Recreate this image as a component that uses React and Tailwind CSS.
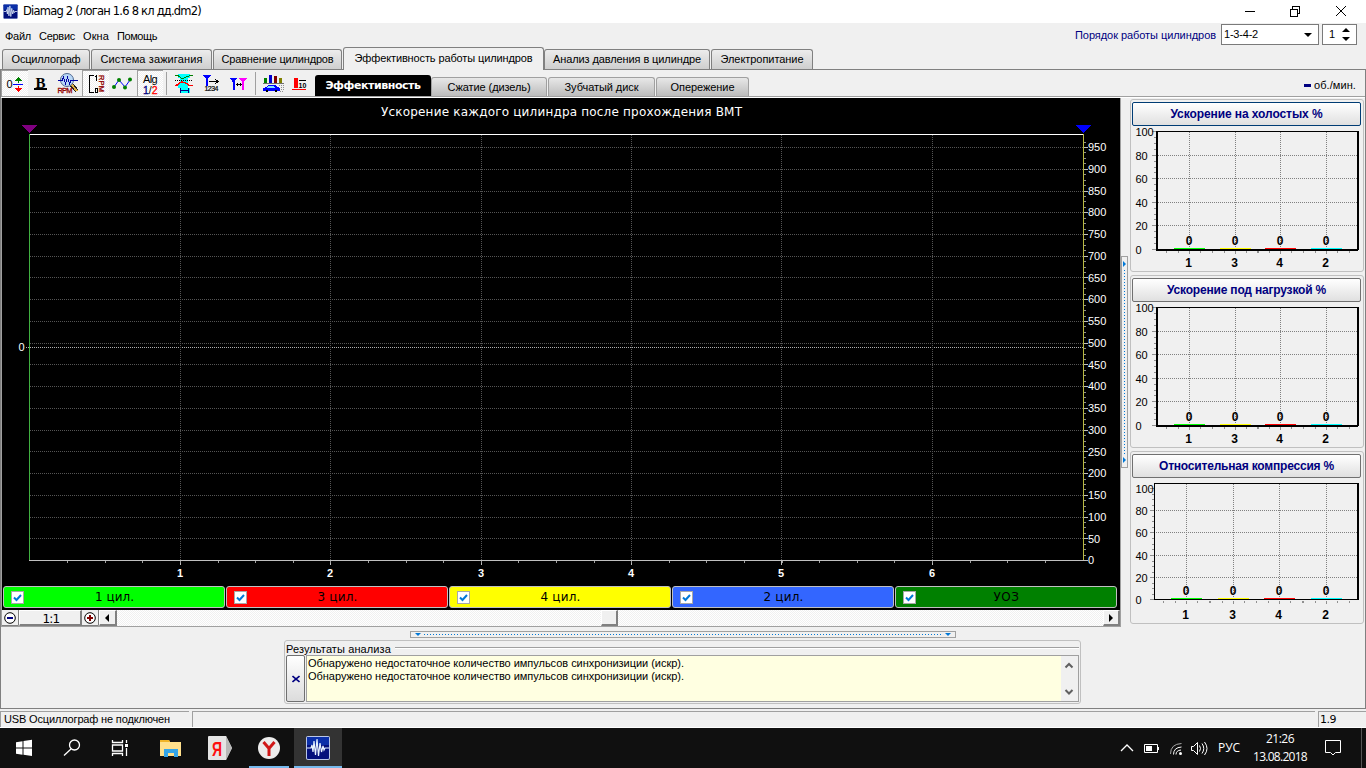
import { useLayoutEffect, useRef, useState } from "react";
import clsx from "clsx";

// Text set to a fixed width, the spare pixels are spread between the letters
const Label = ({ w, className, children }) => {
  const ref = useRef(null);
  const [spacing, setSpacing] = useState(0);

  useLayoutEffect(() => {
    const el = ref.current;
    el.style.letterSpacing = "0px";
    const natural = el.getBoundingClientRect().width;
    setSpacing((w - natural) / el.textContent.length);
  }, [w, children]);

  return (
    <span
      ref={ref}
      className={clsx("inline-block whitespace-nowrap", className)}
      style={{ letterSpacing: `${spacing}px` }}
    >
      {children}
    </span>
  );
};

const AppLogo = ({ className }) => (
  <svg viewBox="0 0 24 24" className={className}>
    <rect width="24" height="24" rx="2" fill="#b9c6e8" />
    <rect x="1" y="1" width="22" height="22" rx="1" fill="#03107c" />
    <rect x="1" y="1" width="22" height="8" fill="#0b2fa8" />
    <path
      d="M1 12H5L6 9L7 16L8 5L9.500 19L11 3L12.500 20L14 7L15.500 16L17 10L18 14L19 12H23"
      fill="none"
      stroke="#e8f4ff"
      strokeWidth="1.200"
    />
  </svg>
);

const TitleBar = () => (
  <header className="flex h-[23px] items-center bg-white pl-[3px]">
    <AppLogo className="size-[15px]" />
    <Label w={178} className="ml-[5px] text-[11.5px] font-['DejaVu_Sans',sans-serif]">
      Diamag 2 (логан 1.6 8 кл дд.dm2)
    </Label>
    <svg className="ml-auto h-[22px] w-[130px]" viewBox="1236 0 130 22" fill="none" stroke="#000" shapeRendering="crispEdges">
      <path d="M1245 10.500h10" />
      <path d="M1290.500 8.500h7v7h-7zM1292.500 8v-2.500h7v7h-2" />
      <path d="M1336 5l10 10M1346 5l-10 10" shapeRendering="auto" />
    </svg>
  </header>
);

const menus = [
  { name: "Файл", w: 26 },
  { name: "Сервис", w: 36 },
  { name: "Окна", w: 26 },
  { name: "Помощь", w: 40 },
];

const MenuBar = () => (
  <div className="flex h-[24px] items-start pl-[5px]">
    <nav className="flex gap-[8px] pt-[5px]">
      {menus.map((m) => (
        <Label key={m.name} w={m.w} className="text-[11px] leading-4">
          {m.name}
        </Label>
      ))}
    </nav>
    <Label w={141} className="ml-auto pt-[4px] text-[11px] leading-4 text-[#000080]">
      Порядок работы цилиндров
    </Label>
    <div className="ml-[5px] mt-[1px] flex h-[21px] w-[98px] items-center justify-between border border-[#7a7a7a] bg-white pl-[2px] pr-[6px]">
      <Label w={34} className="pb-[1px] text-[11px]">1-3-4-2</Label>
      <span className="border-x-[4px] border-t-[4px] border-x-transparent border-t-black" />
    </div>
    <div className="ml-[3px] mr-[9px] mt-[1px] flex h-[21px] w-[35px] items-center justify-between border border-[#7a7a7a] bg-white pl-[6px] pr-[6px] text-[11px]">
      1
      <span className="flex flex-col gap-[5px]">
        <span className="border-x-[4px] border-b-[4px] border-x-transparent border-b-black" />
        <span className="border-x-[4px] border-t-[4px] border-x-transparent border-t-black" />
      </span>
    </div>
  </div>
);

const tabs = [
  { name: "Осциллограф", box: "w-[88px]", w: 69 },
  { name: "Система зажигания", box: "w-[121px]", w: 102 },
  { name: "Сравнение цилиндров", box: "w-[129px]", w: 112 },
  { name: "Эффективность работы цилиндров", box: "w-[201px]", w: 178, active: true },
  { name: "Анализ давления в цилиндре", box: "w-[166px]", w: 148 },
  { name: "Электропитание", box: "w-[102px]", w: 83 },
];

const Tabs = () => (
  <div className="flex h-[23px] items-end border-b border-[#808080] pl-[2px]">
    {tabs.map((t) => (
      <div
        key={t.name}
        className={clsx(
          "flex shrink-0 justify-center rounded-t-[3px] border border-b-0 border-[#808080] text-[11px]",
          t.box,
          t.active
            ? "-mb-px h-[23px] bg-[#f0f0f0] pt-[2px]"
            : "mr-px h-[20px] bg-linear-to-b from-[#ececec] to-[#cfcfcf] pt-[1px] last:mr-0"
        )}
      >
        <Label w={t.w} className="leading-[17px]">{t.name}</Label>
      </div>
    ))}
  </div>
);

const pressed =
  "border-l border-t border-[#a0a0a0] bg-[repeating-conic-gradient(#ffffff_0_25%,#f0f0f0_0_50%)] bg-[length:2px_2px]";

const ToolButton = ({ x, w = 27, down, children }) => (
  <svg
    viewBox={down ? `${x + 1} 71 ${w - 1} 25` : `${x} 70 ${w} 26`}
    width={w}
    height="26"
    className={clsx("shrink-0", down && pressed)}
    shapeRendering="crispEdges"
    fill="none"
  >
    {children}
  </svg>
);

const Toolbar = () => (
  <div className="flex h-[26px] items-start">
    <ToolButton x={1} down>
      <text x="6.500" y="88" fontSize="11" fill="#000">0</text>
      <path d="M13 84.500h10" stroke="#0000ff" />
      <path d="M18.500 83v-3" stroke="#008000" />
      <path d="M15 81h7l-3.500-4z" fill="#008000" />
      <path d="M18.500 86v3" stroke="#ff0000" />
      <path d="M15 88h7l-3.500 4z" fill="#ff0000" />
    </ToolButton>
    <ToolButton x={28}>
      <text x="35.500" y="87.500" fontSize="15" fontWeight="bold" fill="#000" className="font-['Liberation_Serif',serif]">B</text>
      <path d="M34 88h13v2h-13z" fill="#000" />
    </ToolButton>
    <ToolButton x={55}>
      <path d="M71 84l6 7" stroke="#202020" strokeWidth="4" />
      <path d="M71 84l6 7" stroke="#e0b040" strokeWidth="2" />
      <circle cx="67" cy="80" r="6.500" fill="#b8d8f8" stroke="#506890" shapeRendering="auto" />
      <path d="M58 80.500h4l1.500-3 2 6 2-6 2 6 1.500-3h7" stroke="#0000a0" />
      <text x="57.500" y="93" fontSize="7.500" textLength="15" fill="#900000" stroke="#900000" strokeWidth=".3">RPM</text>
    </ToolButton>
    <ToolButton x={82} down>
      <path d="M94 75.500h-4.500v17h4.500" stroke="#000" />
      <path d="M96.500 75v6M95 76.500h1" stroke="#000" />
      <rect x="95.500" y="88.500" width="2" height="4" stroke="#000" />
      <text transform="translate(98.500 75) rotate(90)" x="0" y="0" fontSize="7.500" textLength="17" fill="#900000" stroke="#900000" strokeWidth=".3">RPM</text>
    </ToolButton>
    <ToolButton x={109} w={28}>
      <path d="M114 87l5-7 6 7 5-7" stroke="#0000ff" shapeRendering="auto" />
      <g fill="#008000" shapeRendering="auto">
        <circle cx="114" cy="87" r="2" />
        <circle cx="119" cy="80" r="2" />
        <circle cx="125" cy="87.500" r="2" />
        <circle cx="130" cy="79.500" r="2" />
      </g>
    </ToolButton>
    <ToolButton x={137} w={26} down>
      <text x="143" y="83" fontSize="11" textLength="14.500" fill="#000">Alg</text>
      <text x="143" y="94" fontSize="10.500" textLength="14.500" strokeWidth=".3">
        <tspan fill="#000080" stroke="#000080">1</tspan>
        <tspan fill="#000">/</tspan>
        <tspan fill="#ff0000" stroke="#ff0000">2</tspan>
      </text>
    </ToolButton>
    <span className="ml-[3px] mr-[4px] mt-[2px] h-[23px] w-px bg-[#a0a0a0]" />
    <ToolButton x={171}>
      <path d="M178 74h12v4h-2v10h2v5h-10v-5h-2v-4h2v-6h-2z" fill="#00ffff" />
      <path d="M175 75q3 0 5 2t4 1 5-2 4-1" stroke="#008000" />
      <path d="M175 85.500q3 0 4-2t5-1 4 2 5 1" stroke="#ff0000" strokeWidth="1.500" />
      <path d="M175 80.500h18" stroke="#000" strokeDasharray="1 1" />
      <path d="M180.500 88v5M188.500 88v5M181 90.500h7" stroke="#000080" />
    </ToolButton>
    <ToolButton x={198}>
      <path d="M203 75h8l-3 4v7h-2v-7z" fill="#0000ff" />
      <path d="M209 81.500h8M215 79l3 2.500-3 2.500" stroke="#000" />
      <text x="204.500" y="91" fontSize="7" textLength="14" fill="#000" stroke="#000" strokeWidth=".2">1234</text>
    </ToolButton>
    <ToolButton x={225}>
      <path d="M230 78h7l-2.500 4v8h-2v-8z" fill="#0000ff" />
      <path d="M239 78h8l-3 4v8h-2v-8z" fill="#ff00ff" />
      <path d="M236 84.500h6" stroke="#000" />
      <path d="M238 82.500v4l-2-2zM240 82.500v4l2-2z" fill="#000" />
    </ToolButton>
    <span className="ml-[3px] mr-[4px] mt-[2px] h-[23px] w-px bg-[#a0a0a0]" />
    <ToolButton x={260}>
      <path d="M264 78h3v5h-3z" fill="#008000" />
      <path d="M269 75h3v8h-3z" fill="#0000d0" />
      <path d="M274 76h3v7h-3z" fill="#800000" />
      <path d="M279 78h3v5h-3z" fill="#808000" />
      <path d="M263 83.500h21" stroke="#707070" />
      <path d="M263 88l3-1 2-2h7l3 2 2 1v3h-17z" fill="#0000ff" />
      <path d="M268 86h6l1 2h-8z" fill="#80e0ff" />
      <circle cx="267" cy="91" r="1.500" fill="#000" />
      <circle cx="276" cy="91" r="1.500" fill="#000" />
      <path d="M279 85.500h5M281 87.500h3M281 89.500h3M280 91.500h4" stroke="#909090" strokeDasharray="1 1" />
    </ToolButton>
    <ToolButton x={287}>
      <path d="M294 78h4v10h-4z" fill="#ff0000" />
      <path d="M292 89.500h14" stroke="#ff0000" />
      <path d="M299 80.500h7" stroke="#000" />
      <text x="298.500" y="88" fontSize="7" fontWeight="bold" fill="#000">10</text>
    </ToolButton>
    <SubTabs />
    <div className="ml-auto flex items-center gap-[3px] pr-[9px] pt-[7px]">
      <span className="h-[3px] w-[7px] bg-[#000080]" />
      <Label w={42} className="text-[11px] leading-4">об./мин.</Label>
    </div>
  </div>
);

const subTabs = [
  { name: "Сжатие (дизель)", box: "w-[116px]", w: 83 },
  { name: "Зубчатый диск", box: "w-[107px]", w: 74 },
  { name: "Опережение", box: "w-[93px]", w: 64 },
];

const SubTabs = () => (
  <div className="ml-px flex h-[26px] items-end">
    <div className="flex h-[21px] w-[116px] justify-center rounded-t-[3px] bg-black text-[11px] text-white">
      <Label w={95} className="font-bold leading-[22px] font-['DejaVu_Sans',sans-serif]">
        Эффективность
      </Label>
    </div>
    {subTabs.map((t) => (
      <div
        key={t.name}
        className={clsx(
          "mr-px flex h-[19px] justify-center rounded-t-[3px] border border-b-0 border-[#a0a0a0] bg-linear-to-b from-[#e8e8e8] to-[#bcbcbc] text-[11px]",
          t.box
        )}
      >
        <Label w={t.w} className="leading-[18px]">{t.name}</Label>
      </div>
    ))}
  </div>
);

const PLOT = { left: 29, right: 1083, top: 134, bottom: 560 };
const stepX = 150.4;
const stepY = 21.74;
const snap = (v) => Math.floor(v) + 0.5;

const MainChart = () => (
  <svg viewBox="2 98 1118 488" width="1118" height="488" className="block bg-black" shapeRendering="crispEdges">
    <text x="381" y="116" fontSize="12" textLength="361" fill="#fff" className="font-['DejaVu_Sans',sans-serif]">
      Ускорение каждого цилиндра после прохождения ВМТ
    </text>
    <path d="M21 125h16l-8 8z" fill="#800080" />
    <path d="M1075 125h16l-8 8z" fill="#0000ff" />
    {Array.from({ length: 19 }, (_, i) => i + 1).map((i) => (
      <path key={i} d={`M30 ${snap(PLOT.bottom + 0.6 - i * stepY)}H1083`} stroke="#555" strokeDasharray="1 1" />
    ))}
    <path d="M26 347.500H1083" stroke="#b0b0b0" strokeDasharray="1 1" />
    {[1, 2, 3, 4, 5, 6].map((i) => {
      const x = snap(PLOT.left + 0.8 + i * stepX);
      return (
        <g key={i}>
          <path d={`M${x} 135V560`} stroke="#555" strokeDasharray="1 1" />
          <path d={`M${x} 560v5`} stroke="#c0c0c0" />
          <text x={x - 0.5} y="577" fontSize="11" fontWeight="bold" textAnchor="middle" fill="#fff">{i}</text>
        </g>
      );
    })}
    {Array.from({ length: 27 }, (_, i) => i + 1).map((i) => (
      <path key={i} d={`M${snap(PLOT.left + 1 + (i * stepX) / 4)} 560v3`} stroke="#a0a0a0" />
    ))}
    {Array.from({ length: 78 }, (_, i) => (
      <path key={i} d={`M1084 ${snap(PLOT.bottom + 0.6 - (i * stepY) / 4)}h2`} stroke="#909090" />
    ))}
    {Array.from({ length: 20 }, (_, i) => (
      <g key={i}>
        <path d={`M1084 ${snap(PLOT.bottom + 0.6 - i * stepY)}h4`} stroke="#c0c0c0" />
        <text x="1088" y={Math.round(PLOT.bottom + 0.3 - i * stepY) + 4} fontSize="11" fill="#fff">{i * 50}</text>
      </g>
    ))}
    <text x="18.500" y="351" fontSize="11" fill="#fff">0</text>
    <path d="M29 134.500H1083" stroke="#fff" />
    <path d="M29 560.500H1084" stroke="#c0c0c0" />
    <path d="M29.500 134V560" stroke="#40b040" />
    <path d="M1083.500 134V560" stroke="#b8b840" />
  </svg>
);

const Check = () => (
  <svg viewBox="0 0 13 13" className="ml-[7px] size-[13px] shrink-0">
    <rect x=".5" y=".5" width="12" height="12" fill="#fff" stroke="#a8a8a8" />
    <path d="M3 6.500l2.500 2.500L10 4" fill="none" stroke="#0078d7" strokeWidth="2" />
  </svg>
);

const channels = [
  { name: "1 цил.", w: 39, color: "bg-[#00ff00]" },
  { name: "3 цил.", w: 40, color: "bg-[#ff0000]" },
  { name: "4 цил.", w: 40, color: "bg-[#ffff00]" },
  { name: "2 цил.", w: 40, color: "bg-[#3366ff]" },
  { name: "УОЗ", w: 26, color: "bg-[#008000]" },
];

const Channels = () => (
  <div className="flex h-[24px] gap-px bg-black pl-px">
    {channels.map((c) => (
      <div
        key={c.name}
        className={clsx("flex h-[22px] w-[222px] items-center rounded-[3px] border border-[#c0c0c0]", c.color)}
      >
        <Check />
        <div className="flex flex-1 justify-center pr-[19px] text-[12px] font-['DejaVu_Sans',sans-serif]">
          <Label w={c.w}>{c.name}</Label>
        </div>
      </div>
    ))}
  </div>
);

const raised = "border-r-2 border-b-2 border-r-[#808080] border-b-[#808080] border-t border-l border-t-white border-l-white bg-[#f0f0f0]";

const ZoomBar = () => (
  <div className="flex h-[16px] bg-[repeating-conic-gradient(#ffffff_0_25%,#f0f0f0_0_50%)] bg-[length:2px_2px]">
    <ZoomButton color="#000080" />
    <div className={clsx("flex w-[63px] items-center justify-center text-[12px] font-['DejaVu_Sans',sans-serif]", raised)}>
      <Label w={19} className="pt-[3px] pl-[2px]">1:1</Label>
    </div>
    <ZoomButton color="#800000" plus />
    <div className={clsx("flex w-[18px] items-center justify-center", raised)}>
      <span className="mr-px border-y-[4px] border-r-[4px] border-y-transparent border-r-black" />
    </div>
    <div className={clsx("ml-[484px] w-[17px]", raised)} />
    <div className={clsx("ml-auto flex w-[17px] items-center justify-center", raised)}>
      <span className="border-y-[4px] border-l-[4px] border-y-transparent border-l-black" />
    </div>
  </div>
);

const ZoomButton = ({ color, plus }) => (
  <svg viewBox="0 0 17 16" width="17" height="16" className="shrink-0 bg-[#f0f0f0]" fill="none">
    <path d="M16.500 0V15.500H0" stroke="#808080" />
    <circle cx="8" cy="8" r="5.300" stroke="#000" fill="#fff" />
    <path d={plus ? "M5 8h6M8 5v6" : "M5 8h6"} stroke={color} strokeWidth="2" />
  </svg>
);

const panels = [
  {
    title: "Ускорение на холостых %",
    w: 152,
    focused: true,
    y: 127,
    left: 1156,
    top: 131.5,
    bottom: 249.5,
    grid: [155.5, 178.5, 202.5, 225.5],
    first: 131.5,
    cols: [1189.5, 1235.5, 1280.5, 1326.5],
    foot: 266.5,
  },
  {
    title: "Ускорение под нагрузкой %",
    w: 159,
    y: 303,
    left: 1156,
    top: 307.5,
    bottom: 425.5,
    grid: [331.5, 354.5, 378.5, 401.5],
    first: 307.5,
    cols: [1189.5, 1235.5, 1280.5, 1326.5],
    foot: 442.5,
  },
  {
    title: "Относительная компрессия %",
    w: 175,
    y: 479,
    left: 1154,
    top: 483.5,
    bottom: 599.5,
    grid: [510.5, 532.5, 555.5, 577.5],
    first: 488.5,
    cols: [1186.5, 1233.5, 1279.5, 1326.5],
    foot: 618.5,
    thin: true,
  },
];

const cylinders = [
  { n: 1, color: "#00ff00" },
  { n: 3, color: "#ffff00" },
  { n: 4, color: "#ff0000" },
  { n: 2, color: "#00ffff" },
];

const BarChart = ({ p }) => {
  const rows = [p.first, ...p.grid, p.bottom];
  return (
    <svg
      viewBox={`1132 ${p.y} 229 144`}
      width="229"
      height="144"
      className="block overflow-visible"
      shapeRendering="crispEdges"
      fill="none"
    >
      {p.grid.map((y) => (
        <path key={y} d={`M${p.left} ${y}H1357`} stroke="#808080" strokeDasharray="1 1" />
      ))}
      {rows.map((y, i) => (
        <g key={y}>
          <path d={`M${p.left - 4} ${y}h4`} stroke="#909090" />
          {i < 5 &&
            [1, 2, 3].map((k) => (
              <path key={k} d={`M${p.left - 2} ${snap(y + ((rows[i + 1] - y) * k) / 4)}h2`} stroke="#909090" />
            ))}
          <text
            x="1135.500"
            y={y + 4}
            fontSize="11"
            fill="#000"
            textLength={i === 0 ? 18 : i === 5 ? 6 : 12}
          >
            {100 - i * 20}
          </text>
        </g>
      ))}
      <path d={`M${p.left} ${p.top}H1358`} stroke="#000" />
      {p.thin ? (
        <path d={`M${p.left + 0.5} ${p.top}V${p.bottom}M${p.left} ${p.bottom}H1358`} stroke="#000" />
      ) : (
        <path
          d={`M${p.left + 1} ${p.top - 0.5}V${p.bottom + 1.5}M${p.left} ${p.bottom + 0.5}H1358`}
          stroke="#000"
          strokeWidth="2"
        />
      )}
      <path d={`M1358 ${p.top - 0.5}V${p.bottom + 0.5}`} stroke="#000" strokeWidth="2" />
      {cylinders.map((c, i) => {
        const x = p.cols[i];
        const barY = p.thin ? p.bottom - 1 : p.bottom - 1;
        return (
          <g key={c.n}>
            <path d={`M${x} ${p.top}V${p.bottom - 1}`} stroke="#808080" strokeDasharray="1 1" />
            <path d={`M${x - 15.5} ${barY}h31`} stroke={c.color} />
            <path d={`M${x} ${p.bottom + 1.5}v3`} stroke="#909090" />
            {[-2, -1, 1, 2].map((k) => (
              <path key={k} d={`M${snap(x + k * 11.4)} ${p.bottom + 1.5}v2`} stroke="#909090" />
            ))}
            <text x={x - 0.5} y={p.bottom - 5} fontSize="12" fontWeight="bold" textAnchor="middle" fill="#000">0</text>
            <text x={x - 1} y={p.foot} fontSize="12" fontWeight="bold" textAnchor="middle" fill="#000">{c.n}</text>
          </g>
        );
      })}
    </svg>
  );
};

const SidePanels = () => (
  <aside className="flex w-[234px] flex-col gap-[3px] pt-px">
    {panels.map((p) => (
      <section key={p.title} className="h-[173px] rounded-[3px] border border-[#c0c0c0] px-[1px] pt-[2px]">
        <button
          className={clsx(
            "flex h-[24px] w-[229px] items-center justify-center rounded-[2px] border bg-linear-to-b from-white to-[#e0e0e0] text-[12px] font-bold text-[#000080]",
            p.focused ? "border-[#003c74]" : "border-[#707070]"
          )}
        >
          <Label w={p.w}>{p.title}</Label>
        </button>
        <div className="pt-px">
          <BarChart p={p} />
        </div>
      </section>
    ))}
  </aside>
);

const Splitter = () => (
  <div className="mt-[158px] flex h-[212px] w-[7px] flex-col items-center justify-between border border-[#a0a0a0] py-[4px]">
    <span className="border-y-[3px] border-l-[3px] border-y-transparent border-l-[#0078d7]" />
    <span className="my-[3px] w-px flex-1 bg-[repeating-linear-gradient(to_bottom,#0078d7_0_1px,transparent_1px_3px)]" />
    <span className="border-y-[3px] border-l-[3px] border-y-transparent border-l-[#0078d7]" />
  </div>
);

const message = "Обнаружено недостаточное количество импульсов синхронизиции (искр).";

const Results = () => (
  <div className="ml-[283px] mt-[2px] h-[64px] w-[797px] rounded-[3px] border border-[#c0c0c0] pl-[1px]">
    <div className="flex h-[14px] items-center gap-[4px]">
      <Label w={105} className="pt-[2px] text-[11px] leading-4">Результаты анализа</Label>
      <span className="mr-[1px] mb-[1px] h-[2px] flex-1 border-t border-[#a0a0a0] bg-white" />
    </div>
    <div className="flex h-[47px]">
      <button className="flex w-[19px] items-center justify-center rounded-[2px] border border-[#707070] bg-linear-to-b from-white to-[#dcdcdc]">
        <svg viewBox="0 0 8 8" className="size-[8px]" stroke="#000080" strokeWidth="1.600">
          <path d="M.5 1l7 6M7.500 1l-7 6" />
        </svg>
      </button>
      <div className="ml-px mr-px flex flex-1 justify-between border border-[#a0a0a0] bg-[#ffffe1]">
        <div className="flex flex-col items-start pl-[1px] pt-px text-[11px] leading-[13px]">
          <Label w={376}>{message}</Label>
          <Label w={376}>{message}</Label>
        </div>
        <svg viewBox="0 0 17 45" className="h-[45px] w-[17px] bg-[#f0f0f0]" fill="none" stroke="#606060" strokeWidth="2">
          <path d="M4.500 11.500l3.500-3.500 3.500 3.500M4.500 34l3.500 3.500 3.500-3.500" />
        </svg>
      </div>
    </div>
  </div>
);

const StatusBar = () => (
  <footer className="flex h-[19px] items-end gap-[3px] border-b border-white bg-[#f0f0f0] text-[11px] leading-[14px]">
    <div className="h-[16px] w-[189px] border-l border-t border-[#a0a0a0] pl-[3px]">
      <Label w={166}>USB Осциллограф не подключен</Label>
    </div>
    <div className="h-[16px] flex-1 border-l border-t border-[#a0a0a0]" />
    <div className="h-[16px] w-[48px] border-l border-t border-[#a0a0a0] pl-px pt-px font-['DejaVu_Sans',sans-serif]">
      <Label w={16}>1.9</Label>
    </div>
  </footer>
);

const Taskbar = () => (
  <div className="flex h-[40px] bg-[#101010] text-[12px] text-white font-['Open_Sans',sans-serif]">
    <svg viewBox="0 728 294 40" width="294" height="40" fill="none" className="shrink-0">
      <path d="M16 742.200l6.500-1v6.300H16zM23.500 741l8.500-1.200v7.700h-8.500zM16 748.500h6.500v6.300l-6.500-1zM23.500 748.500H32v7.500l-8.500-1.200z" fill="#fff" />
      <g stroke="#fff" strokeWidth="1.300">
        <circle cx="74.500" cy="745" r="5" />
        <path d="M71 749l-7 6.500" />
        <path d="M112.500 740v2.500h10V740M112.500 756v-2.500h10v2.500M112.500 745h10v6h-10zM126.500 740v3M126.500 748v8" />
      </g>
      <path d="M125 744h3v3h-3z" fill="#fff" />
      <path d="M160 740h9l1 2h11v14h-21z" fill="#ffe08c" />
      <path d="M160 740h9l1 2h-10z" fill="#f0b429" />
      <path d="M164 757v-8h14v8h-4v-4h-6v4z" fill="#35a5e8" />
      <path d="M209 736h17l6 12-6 12h-17q-1 0-1-1v-22q0-1 1-1z" fill="#e4e4e4" />
      <path d="M226 736l6 12-6 12z" fill="#b8b8b8" />
      <text x="212" y="756" fontSize="21" fontWeight="bold" textLength="10" lengthAdjust="spacingAndGlyphs" fill="#ff1010" className="font-['Liberation_Sans',sans-serif]">Я</text>
      <circle cx="269" cy="748" r="11" fill="#ececec" />
      <path d="M263.500 742l5.500 6.500 5.500-6.500M269 748v8" stroke="#d01818" strokeWidth="3" />
      <path d="M249 766h40v2h-40z" fill="#76b9ed" />
    </svg>
    <div className="flex w-[48px] items-center justify-center border-b-2 border-[#76b9ed] bg-[#333333] pt-[2px]">
      <AppLogo className="size-[24px]" />
    </div>
    <svg viewBox="1118 728 94 40" width="94" height="40" fill="none" stroke="#fff" className="ml-auto shrink-0">
      <path d="M1121 751l6-6 6 6" strokeWidth="1.300" />
      <path d="M1144.500 744.500h13v8h-13zM1158.500 747v3" />
      <path d="M1146 746h6v5h-6z" fill="#fff" stroke="none" />
      <path d="M1170.500 754q0-10 11-10.500" stroke="#aaa" />
      <path d="M1173.500 754.500q0-7 8-7.500M1176 754.500q0-4 5-4.500" />
      <circle cx="1180.500" cy="753.500" r="1.500" fill="#fff" stroke="none" />
      <path d="M1191.500 746.500h2l4-4v12l-4-4h-2z" />
      <path d="M1199.500 745.500q2 3 0 6M1202 743.500q3.500 5 0 10M1204.500 742q5 6.500 0 13" />
    </svg>
    <div className="ml-[6px] flex w-[22px] items-center">
      <Label w={22}>РУС</Label>
    </div>
    <div className="ml-[13px] flex w-[54px] flex-col items-center pt-[2px] leading-[18px]">
      <Label w={28}>21:26</Label>
      <Label w={54}>13.08.2018</Label>
    </div>
    <svg viewBox="1320 728 46 40" width="59" height="40" fill="none" className="shrink-0" preserveAspectRatio="xMaxYMid meet">
      <path d="M1325.500 740.500h15v12h-5l-2.500 2.500-2.500-2.500h-5z" stroke="#fff" />
      <path d="M1361.500 728v40" stroke="#555" />
    </svg>
  </div>
);

const App = () => {
  return (
    <div className="flex h-[768px] w-[1366px] flex-col overflow-hidden bg-[#f0f0f0] text-black font-['Liberation_Sans',Arial,sans-serif]">
      <TitleBar />
      <MenuBar />
      <Tabs />
      <div className="flex h-[639px] flex-col border-b border-l border-r border-[#808080]">
        <Toolbar />
        <div className="h-px bg-[#a0a0a0]" />
        <div className="h-px bg-white" />
        {/* Plot on the left, cylinder bars on the right */}
        <div className="flex h-[529px]">
          <div className="w-[1120px] border-b border-l border-r border-[#a0a0a0]">
            <MainChart />
            <Channels />
            <ZoomBar />
          </div>
          <Splitter />
          <div className="w-[2px]" />
          <SidePanels />
        </div>
        <div className="ml-[409px] mt-[4px] flex h-[7px] w-[546px] items-center border border-[#a0a0a0] px-[4px]">
          <span className="border-x-[3px] border-t-[3px] border-x-transparent border-t-[#0078d7]" />
          <span className="mx-[3px] h-px flex-1 bg-[repeating-linear-gradient(to_right,#0078d7_0_1px,transparent_1px_3px)]" />
          <span className="border-x-[3px] border-t-[3px] border-x-transparent border-t-[#0078d7]" />
        </div>
        <Results />
      </div>
      <StatusBar />
      <Taskbar />
    </div>
  );
};

export default App;
